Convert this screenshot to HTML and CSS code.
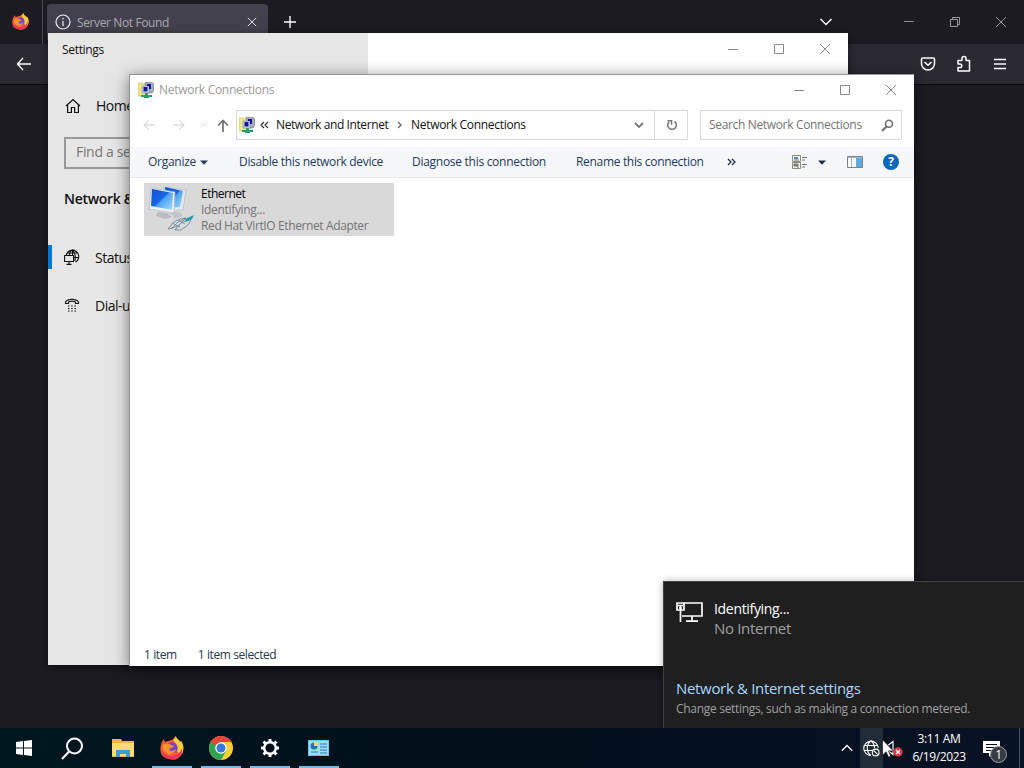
FILE: index.html
```html
<!DOCTYPE html>
<html lang="en">
  <head>
    <meta charset="utf-8">
    <title>Desktop</title>
    <link rel="stylesheet" href="styles.css">
  </head>
  <body>
    <!-- shared icons -->
    <svg class="defs" width="0" height="0">
      <symbol id="net" viewBox="0 0 16 16">
        <path d="M0 1h5l1 1h3v12H0z" fill="#eee58c" stroke="#c9c060" stroke-width=".6"/>
        <path d="M7 .5l7-.3 1.5 1.5v7L14 11H8z" fill="#a7adc0" stroke="#656c80" stroke-width=".6"/>
        <path d="M4 4h7v7H4z" fill="#d6dced" stroke="#777f98" stroke-width=".6"/>
        <path d="M5.500 5h4v4.500h-4zM9 2h4v5h-2V4H9z" fill="#111497"/>
        <path d="M7 11h3v2h4v2h-3v1H6v-1H3v-2h4z" fill="#23a06c"/>
      </symbol>
      <symbol id="firefox" viewBox="0 0 24 24">
        <path d="M12 4C14 3 14 1 16 0c0 3 3 3 4 6l1-1c3 4 3 9 1 13-3 5-8 7-13 5C3 22 0 18 .5 12 .7 8 2 5 4 3l1 3 3-1z" fill="#ff5b36"/>
        <path d="M16 0c0 3 3 3 4 6l1-1c3 4 3 9 1 12-2 1-4 0-5-3 1-5-2-8-4-10 2-1 2-3 3-4z" fill="#ffcf38"/>
        <path d="M1 13c2 6 9 9 15 6 3-1 5-4 6-7 1 7-5 11-10 11S2 20 1 13z" fill="#f72f62"/>
        <circle cx="12" cy="12" r="5.7" fill="#7744c9"/>
        <path d="M3 9c3-3 6-1 8 0l3 1c-1 2-4 2-5 3 1 3 5 2 7 0-1 5-7 7-11 3-2-2-3-4-2-7z" fill="#ff9230"/>
      </symbol>
      <symbol id="close" viewBox="0 0 12 12">
        <path d="M1 1l10 10M11 1L1 11" fill="none" stroke="currentColor"/>
      </symbol>
    </svg>

    <div class="desktop">
      <div class="firefox">
        <div class="tab-bar">
          <div class="pinned">
            <svg width="17" height="17"><use href="#firefox"/></svg>
          </div>
          <div class="tab">
            <svg width="16" height="16" viewBox="0 0 16 16" fill="none" stroke="#f0f0f4" stroke-width="1.2">
              <circle cx="8" cy="8" r="7"/>
              <path d="M8 7v5M8 4v1.6"/>
            </svg>
            <span class="tab-title">Server Not Found</span>
            <svg class="tab-close" width="10" height="10"><use href="#close"/></svg>
          </div>
          <svg class="new-tab" width="14" height="14" viewBox="0 0 14 14"><path d="M7 1v12M1 7h12" stroke="#fbfbfe" stroke-width="1.4"/></svg>
          <div class="browser-controls">
            <svg width="14" height="10" viewBox="0 0 14 10" fill="none" stroke="#fbfbfe" stroke-width="1.5"><path d="M1.500 2L7 7.500 12.500 2"/></svg>
            <svg width="12" height="12" viewBox="0 0 12 12"><path d="M1 5.500h10" stroke="#88878d"/></svg>
            <svg width="12" height="12" viewBox="0 0 12 12" fill="none" stroke="#99989e"><path d="M1.500 3.500h7v7h-7zM3.500 3.500v-2h7v7h-2"/></svg>
            <svg width="12" height="12"><use href="#close"/></svg>
          </div>
        </div>
        <div class="nav-bar">
          <svg width="16" height="14" viewBox="0 0 16 14" fill="none" stroke="#fbfbfe" stroke-width="1.4"><path d="M15 7H1.500M7 1L1.500 7 7 13"/></svg>
          <div class="nav-tools">
            <svg width="16" height="16" viewBox="0 0 16 16" fill="none" stroke="#fbfbfe" stroke-width="1.5"><path d="M2.500 2h11q1 0 1 1v4.500a6.500 6.500 0 0 1-13 0V3q0-1 1-1zM4.500 6L8 9.300 11.500 6"/></svg>
            <svg width="16" height="18" viewBox="0 0 16 18" fill="none" stroke="#fbfbfe" stroke-width="1.5" stroke-linejoin="round"><path d="M2 5.500h4V3.500a2 2 0 0 1 4 0v2h3.500V16H2v-3.500h2a1.800 1.800 0 0 0 0-3.600H2z"/></svg>
            <svg width="14" height="14" viewBox="0 0 14 14"><path d="M1 2.500h12M1 7h12M1 11.500h12" stroke="#fbfbfe" stroke-width="1.4"/></svg>
          </div>
        </div>
      </div>

      <div class="window settings">
        <div class="sidebar">
          <div class="settings-title">Settings</div>
          <div class="side-item home">
            <svg width="16" height="16" viewBox="0 0 16 16" fill="none" stroke="#111" stroke-width="1.2"><path d="M1 8l7-6.500L15 8M2.600 6.500v8h3.800V9.500h3.200v5h3.800v-8"/></svg>
            <span>Home</span>
          </div>
          <div class="find">Find a se</div>
          <div class="side-heading">Network &amp; Internet</div>
          <div class="side-item status">
            <svg width="16" height="16" viewBox="0 0 16 16" fill="none" stroke="#111" stroke-width="1.1">
              <path d="M2.300 6A6.300 6.300 0 1 1 11.500 13M3 4h11M8.500.8C6 2 5.500 4 5.300 6M8.500.8c3 3 3.500 6 2.300 11M8.500.8V6M9.500 8.500h5.300"/>
              <path d="M.6 6.500h9v6h-9zM5 12.500v3M2.500 15.400h5"/>
            </svg>
            <span>Status</span>
          </div>
          <div class="side-item dial">
            <svg width="16" height="16" viewBox="0 0 16 16" fill="none" stroke="#111" stroke-width="1.1">
              <path d="M1.500 6.500V5C4 1.500 12 1.500 14.500 5v1.500h-3V5C10 4 6 4 4.500 5v1.500z"/>
              <path d="M4 9h8M4 11.500h8M4 14h8" stroke-dasharray="1.500 1.700"/>
            </svg>
            <span>Dial-up</span>
          </div>
        </div>
        <div class="window-controls">
          <svg width="12" height="12" viewBox="0 0 12 12"><path d="M1 6.500h10" stroke="currentColor"/></svg>
          <svg width="12" height="12" viewBox="0 0 12 12"><path d="M1.500 1.500h9v9h-9z" fill="none" stroke="currentColor"/></svg>
          <svg width="12" height="12"><use href="#close"/></svg>
        </div>
      </div>

      <div class="window explorer">
        <div class="title-bar">
          <svg width="16" height="16"><use href="#net"/></svg>
          <span class="title">Network Connections</span>
          <div class="window-controls">
            <svg width="12" height="12" viewBox="0 0 12 12"><path d="M1 6.500h10" stroke="currentColor"/></svg>
            <svg width="12" height="12" viewBox="0 0 12 12"><path d="M1.500 1.500h9v9h-9z" fill="none" stroke="currentColor"/></svg>
            <svg width="12" height="12"><use href="#close"/></svg>
          </div>
        </div>

        <div class="address-row">
          <div class="history">
            <svg width="12" height="12" viewBox="0 0 12 12" fill="none" stroke="#dcdcdc" stroke-width="1.3"><path d="M12 6H1M5.500 1.500L1 6l4.500 4.500"/></svg>
            <svg width="12" height="12" viewBox="0 0 12 12" fill="none" stroke="#dcdcdc" stroke-width="1.3"><path d="M0 6h11M6.500 1.500L11 6l-4.500 4.500"/></svg>
            <svg width="6" height="6" viewBox="0 0 6 6" fill="none" stroke="#d0d0d0"><path d="M.5 1.500L3 4l2.500-2.500"/></svg>
            <svg width="12" height="13" viewBox="0 0 12 13" fill="none" stroke="#707070" stroke-width="1.700"><path d="M6 13V1.500M1 6.500l5-5 5 5"/></svg>
          </div>
          <div class="address">
            <svg width="16" height="16"><use href="#net"/></svg>
            <svg width="9" height="8" viewBox="0 0 9 8" fill="none" stroke="#333" stroke-width="1.200"><path d="M4 1L1 4l3 3M8 1L5 4l3 3"/></svg>
            <span>Network and Internet</span>
            <svg width="5" height="8" viewBox="0 0 5 8" fill="none" stroke="#666" stroke-width="1.400"><path d="M1 1l3 3-3 3"/></svg>
            <span class="here">Network Connections</span>
            <svg width="10" height="7" viewBox="0 0 10 7" fill="none" stroke="#777" stroke-width="1.800"><path d="M1 1l4 4 4-4"/></svg>
          </div>
          <div class="refresh">
            <svg width="12" height="12" viewBox="0 0 12 12" fill="none" stroke="#777" stroke-width="1.600"><path d="M8.500 2.500A4.300 4.300 0 1 1 3 3M1.500 1.800h4v4"/></svg>
          </div>
          <div class="search">
            <span>Search Network Connections</span>
            <svg width="13" height="13" viewBox="0 0 13 13" fill="none" stroke="#6d6d6d" stroke-width="1.600"><circle cx="8" cy="4.800" r="3.500"/><path d="M5.500 7.500L1 12" stroke-width="2"/></svg>
          </div>
        </div>

        <div class="toolbar">
          <span class="organize">Organize</span>
          <svg width="8" height="5" viewBox="0 0 8 5"><path d="M0 .5h8L4 4.800z" fill="#1e395b"/></svg>
          <span class="disable">Disable this network device</span>
          <span class="diagnose">Diagnose this connection</span>
          <span class="rename">Rename this connection</span>
          <svg width="9" height="8" viewBox="0 0 9 8" fill="none" stroke="#1e2c4b" stroke-width="1.300"><path d="M1 1l3 3-3 3M5 1l3 3-3 3"/></svg>
          <svg width="16" height="16" viewBox="0 0 16 16"><path d="M.5 1.500h8v6h-8zM.5 8.500h8v6h-8z" fill="#f4f4ed" stroke="#8b8b82"/><path d="M2 3h4v2H2z" fill="#5686ae"/><path d="M2 6h5M2 10h4v2H2zM5 13h2" fill="#77806b" stroke="#777"/><path d="M10 3.500h5M10 6h3M10 10.500h5M10 13h3" stroke="#67717b"/></svg>
          <svg width="8" height="5" viewBox="0 0 8 5"><path d="M0 .5h8L4 4.800z" fill="#1e2c4b"/></svg>
          <svg width="16" height="12" viewBox="0 0 16 12"><path d="M.5.5h15v11H.5z" fill="#f5fafc" stroke="#77838a"/><path d="M1 1.500h14M4.500 2v9" stroke="#a6b8c3"/><path d="M9 2h6v9H9z" fill="#5cabe0"/></svg>
          <div class="help">?</div>
        </div>

        <div class="files">
          <div class="connection">
            <svg width="48" height="48" viewBox="0 0 48 48">
              <defs>
                <linearGradient id="screen" x1="0" y1="0" x2="1" y2="1"><stop stop-color="#0e4fd7"/><stop offset=".48" stop-color="#1868e5"/><stop offset=".52" stop-color="#4da0f3"/><stop offset="1" stop-color="#a5e0fc"/></linearGradient>
              </defs>
              <path d="M23 27h10l3 4-8 3z" fill="#c3c6c9"/>
              <path d="M17 2l22 3-3 20-16 1z" fill="#e2e8ef" stroke="#b6bdc5" stroke-width=".7"/>
              <path d="M18 2l18 4-3 16-13 1z" fill="url(#screen)"/>
              <path d="M11 27l9 1 5 4-7 2-9-3z" fill="#b9bdc1"/>
              <path d="M4 3l24 4-1 21L2 24z" fill="#eef3f7" stroke="#b2b9c0" stroke-width=".7"/>
              <path d="M5 4l21 4-1 17L4 21z" fill="url(#screen)"/>
              <!-- cable and plug -->
              <path d="M28 36l7-4 9 1-3 6-9 6-7-2z" fill="#d5dee3"/>
              <path d="M21 44l6-7 6-3 6-1-8 8-9 3zM24 44l7-7 8-4M28 45l6-7 10-4-2 5-8 6zM25 38l8 4M31 35l7 4" fill="none" stroke="#7b8992" stroke-width=".9"/>
              <path d="M38 34l9-4-2 4-6 3z" fill="#2b9bad"/>
            </svg>
            <div class="connection-text">
              <div class="name">Ethernet</div>
              <div>Identifying...</div>
              <div class="adapter">Red Hat VirtIO Ethernet Adapter</div>
            </div>
          </div>
        </div>

        <div class="status-bar">
          <span>1 item</span>
          <span>1 item selected</span>
        </div>
      </div>

      <div class="flyout">
        <div class="network">
          <svg width="27" height="21" viewBox="0 0 27 21" fill="none" stroke="#fff" stroke-width="1.700"><path d="M8 1h18v13H6M1 1h7v7H1zM2 3.500h5M4.500 4v16M3 6h3M16 14v5M10 19.200h12"/></svg>
          <div>
            <div class="network-name">Identifying...</div>
            <div class="network-state">No Internet</div>
          </div>
        </div>
        <div class="settings-link">Network &amp; Internet settings</div>
        <div class="settings-hint">Change settings, such as making a connection metered.</div>
      </div>

      <div class="taskbar">
        <div class="task start">
          <svg width="16" height="16" viewBox="0 0 16 16" fill="#fff"><path d="M0 2l7-1v6.500H0zM8 .9L16 0v7.500H8zM0 8.500h7V15l-7-1zM8 8.500h8V16l-8-1z"/></svg>
        </div>
        <div class="task find-task">
          <svg width="23" height="23" viewBox="0 0 23 23" fill="none" stroke="#fff" stroke-width="2"><circle cx="13.500" cy="9" r="7.500"/><path d="M8 14.500L1 22"/></svg>
        </div>
        <div class="task">
          <svg width="22" height="18" viewBox="0 0 22 18"><path d="M0 0h9l1 2h12v16H0z" fill="#edb63c"/><path d="M0 4h22v13H0z" fill="#ffdc78"/><path d="M4 18v-7h14v7h-4v-3H8v3z" fill="#489bc8"/></svg>
        </div>
        <div class="task open">
          <svg width="24" height="24"><use href="#firefox"/></svg>
        </div>
        <div class="task open">
          <svg width="24" height="24" viewBox="0 0 24 24">
            <circle cx="12" cy="12" r="12" fill="#fdce36"/>
            <path d="M1.600 6A12 12 0 0 0 12 24l5.200-9H12z" fill="#31a350"/>
            <path d="M1.600 6l5.200 9L12 12V6z" fill="#31a350"/>
            <path d="M1.600 6A12 12 0 0 1 22.400 6H12L7 9.500z" fill="#e44539"/>
            <circle cx="12" cy="12" r="5.800" fill="#fff"/><circle cx="12" cy="12" r="4.500" fill="#3478df"/>
          </svg>
        </div>
        <div class="task open">
          <svg width="20" height="20" viewBox="-10 -10 20 20" fill="none" stroke="#fff"><circle r="5.800" stroke-width="2.400"/><path d="M0-6v-3M0 6v3M-6 0h-3M6 0h3M4.300-4.300l2.200-2.200M-4.300 4.300l-2.200 2.200M-4.300-4.300l-2.200-2.200M4.300 4.300l2.200 2.200" stroke-width="3"/></svg>
        </div>
        <div class="task open">
          <svg width="21" height="16" viewBox="0 0 21 16"><path d="M0 0h21v16H0z" fill="#67c4ef"/><path d="M1 1h19v14H1z" fill="#9bddf8"/><circle cx="6" cy="6" r="3.500" fill="#2573b5"/><path d="M6 6V2a4 4 0 0 1 4 4z" fill="#f1d765"/><path d="M12 4h7M12 7h7M12 10h7M3 12h7M12 13h7" stroke="#267fbf" stroke-width="1.200"/></svg>
        </div>
        <div class="tray">
          <svg class="tray-up" width="12" height="8" viewBox="0 0 12 8" fill="none" stroke="#fff" stroke-width="1.300"><path d="M.8 6.800L6 1.500l5.200 5.300"/></svg>
          <div class="tray-net">
            <svg width="17" height="17" viewBox="0 0 17 17" fill="none" stroke="#fff" stroke-width="1.100"><path d="M8 15.500A7.200 7.200 0 1 1 15.200 8M1 5.500h14M1 10.500h8M8 1C3 4 3 12 8 15.500M8 1c3 2 3.500 4 3.500 7"/><circle cx="12.700" cy="12.500" r="3.400"/><path d="M10.500 10.300l4.400 4.400"/></svg>
          </div>
          <svg class="tray-sound" width="20" height="18" viewBox="0 0 20 18"><path d="M1 5.500h4l5-4v13l-5-4H1z" fill="none" stroke="#fff" stroke-width="1.200"/><circle cx="15" cy="12" r="4.700" fill="#d9363f"/><path d="M13 10l4 4M17 10l-4 4" stroke="#fff" stroke-width="1.300"/></svg>
          <div class="clock">
            <div class="time">3:11 AM</div>
            <div class="date">6/19/2023</div>
          </div>
          <div class="notifications">
            <svg width="17" height="17" viewBox="0 0 17 17"><path d="M0 1h17v12H9l-3 4v-4H0z" fill="#fff"/><path d="M3 4.500h11M3 7.500h11M3 10.500h7" stroke="#071322"/></svg>
            <div class="badge">1</div>
          </div>
          <div class="show-desktop"></div>
        </div>
      </div>

      <svg class="cursor" width="12" height="19" viewBox="0 0 12 19"><path d="M.5.700v15.500l3.600-3.400 2.500 5.500 2.300-1-2.500-5.400h5z" fill="#fff" stroke="#111" stroke-width=".7"/></svg>
    </div>
  </body>
</html>
```

FILE: styles.css
```css
body {
    margin: 0;
    font-family: "Open Sans", "Noto Sans", sans-serif;
    font-size: 12px;
    letter-spacing: -0.32px;
    line-height: 16px;
    color: #111;
}
* {
    box-sizing: border-box;
}
svg {
    display: block;
    flex-shrink: 0;
}
span {
    white-space: nowrap;
}
.defs {
    position: absolute;
}
.desktop {
    position: relative;
    width: 1024px;
    height: 768px;
    overflow: hidden;
    background-color: #1c1b21;
}

/* browser at the back */
.tab-bar {
    display: flex;
    height: 44px;
    background-color: #1c1b21;
}
.pinned {
    width: 43px;
    padding: 13px 0 0 12px;
    border-right: 1px solid #4c4a55;
}
.tab {
    display: flex;
    align-items: center;
    width: 221px;
    height: 36px;
    margin: 4px 0 0 4px;
    padding-left: 8px;
    border-radius: 4px 4px 0 0;
    background-color: #42414d;
}
.tab-title {
    width: 170px;
    margin-left: 6px;
    padding-top: 2px;
    letter-spacing: -0.38px;
    color: #aaa9b2;
}
.tab-close {
    color: #fff;
}
.new-tab {
    margin: 15px 0 0 15px;
}
.browser-controls {
    display: grid;
    grid-template-columns: 84px 46px 46px 29px;
    align-items: center;
    height: 44px;
    margin-left: auto;
    color: #99989e;
}
.nav-bar {
    display: flex;
    align-items: center;
    height: 41px;
    padding: 0 17px 1px 16px;
    background-color: #2b2a33;
    border-bottom: 1px solid #09090c;
}
.nav-tools {
    display: grid;
    grid-template-columns: 36px 37px 14px;
    align-items: center;
    margin-left: auto;
}

/* windows */
.window {
    position: absolute;
    background-color: #fff;
}
.window-controls {
    display: flex;
    gap: 34px;
    margin-left: auto;
    color: #888;
}
.settings {
    display: flex;
    left: 48px;
    top: 33px;
    width: 800px;
    height: 632px;
    font-size: 14px;
    box-shadow: 0 2px 9px rgba(0, 0, 0, 0.5);
}
.settings > .window-controls {
    padding: 10px 17px 0 0;
}
.sidebar {
    width: 320px;
    background-color: #e6e6e6;
}
.settings-title {
    padding: 9px 14px;
    font-size: 12px;
}
.side-item {
    display: flex;
    align-items: center;
    gap: 15px;
    height: 24px;
    margin-bottom: 24px;
    padding-left: 16px;
    letter-spacing: -0.5px;
}
.side-item.home {
    margin: 27px 0 19px;
    padding-left: 17px;
}
.find {
    width: 290px;
    height: 32px;
    margin-left: 16px;
    padding: 5px 10px;
    border: 2px solid #999;
    color: #777;
}
.side-heading {
    padding: 22px 16px 38px;
    font-weight: 600;
    letter-spacing: -0.3px;
}
.status {
    border-left: 4px solid #0078d4;
    padding-left: 12px;
}
.status span,
.dial span {
    padding-top: 2px;
}

.explorer {
    display: flex;
    flex-direction: column;
    left: 129px;
    top: 74px;
    width: 785px;
    height: 592px;
    border: 1px solid #949494;
    border-right-color: #fff;
    border-bottom-color: #fff;
    box-shadow: 0 3px 15px rgba(0, 0, 0, 0.5);
}
.title-bar {
    display: flex;
    align-items: center;
    height: 29px;
    padding: 0 16px 0 8px;
    color: #9a9a9a;
}
.title {
    margin-left: 5px;
    letter-spacing: -0.28px;
}
.address-row {
    display: flex;
    height: 30px;
    margin-top: 6px;
}
.history {
    display: grid;
    grid-template-columns: 30px 27px 17px 19px;
    align-items: center;
    width: 106px;
    padding-left: 13px;
}
.address {
    display: grid;
    grid-template-columns: 21px 16px 121px 14px 223px 10px;
    align-items: center;
    width: 419px;
    padding-left: 2px;
    border: 1px solid #d9d9d9;
    letter-spacing: -0.4px;
}
.here {
    letter-spacing: -0.3px;
}
.refresh {
    display: grid;
    place-items: center;
    width: 33px;
    padding-left: 2px;
    border: 1px solid #d9d9d9;
    border-left: none;
}
.search {
    display: flex;
    align-items: center;
    justify-content: space-between;
    width: 202px;
    margin-left: 12px;
    padding: 0 7px 0 8px;
    border: 1px solid #d9d9d9;
    letter-spacing: -0.34px;
    color: #737373;
}
.toolbar {
    display: grid;
    grid-template-columns: 52px 39px 173px 164px 151px 65px 26px 29px 36px 16px;
    align-items: center;
    height: 31px;
    margin-top: 7px;
    padding-left: 18px;
    background-color: #f5f7fa;
    border-bottom: 1px solid #e4e8ed;
    color: #1e395b;
}
.organize,
.diagnose {
    letter-spacing: -0.28px;
}
.help {
    width: 16px;
    height: 16px;
    border-radius: 50%;
    background-color: #0868be;
    color: #fff;
    font-weight: bold;
    text-align: center;
}
.files {
    flex: 1;
    padding: 5px 14px;
}
.connection {
    display: flex;
    width: 250px;
    height: 53px;
    padding: 2px 3px;
    background-color: #d9d9d9;
    color: #737373;
}
.connection-text {
    margin: 1px 0 0 6px;
}
.name {
    letter-spacing: -0.5px;
    color: #000;
}
.adapter {
    letter-spacing: -0.38px;
}
.status-bar {
    display: flex;
    gap: 21px;
    height: 18px;
    padding-left: 14px;
    letter-spacing: -0.4px;
    color: #26384c;
}

/* network flyout */
.flyout {
    position: absolute;
    left: 663px;
    top: 581px;
    width: 361px;
    height: 147px;
    padding: 18px 12px 0;
    border: 1px solid #414141;
    border-width: 1px 0 0 1px;
    background-color: #1f1f1f;
    color: #a0a0a0;
    box-shadow: 0 0 7px rgba(0, 0, 0, 0.3);
}
.network {
    display: flex;
    gap: 11px;
    height: 78px;
}
.network svg {
    margin-top: 2px;
}
.network-name {
    height: 18px;
    padding-top: 1px;
    font-size: 14px;
    color: #fff;
}
.network-state {
    font-size: 15px;
    line-height: 20px;
}
.settings-link {
    margin-bottom: 3px;
    font-size: 15px;
    line-height: 20px;
    color: #a6d8ff;
}
.settings-hint {
    letter-spacing: -0.3px;
}

/* taskbar */
.taskbar {
    position: absolute;
    left: 0;
    top: 728px;
    display: flex;
    width: 1024px;
    height: 40px;
    background: linear-gradient(to right, #001720, #020f1b 50%, #071224);
}
.task {
    display: grid;
    place-items: center;
    width: 49px;
    height: 40px;
}
.start,
.find-task {
    padding-right: 2px;
}
.open {
    background: linear-gradient(#76b9ed, #76b9ed) center bottom / 40px 2px no-repeat;
}
.tray {
    display: flex;
    align-items: center;
    margin-left: auto;
    color: #fff;
}
.tray-up {
    margin-right: 7px;
}
.tray-net {
    display: grid;
    place-items: center;
    width: 23px;
    height: 40px;
    background-color: #202c38;
}
.tray-sound {
    margin-top: 2px;
}
.clock {
    width: 72px;
    line-height: 18px;
    text-align: center;
}
.date {
    letter-spacing: -0.4px;
}
.notifications {
    position: relative;
    width: 44px;
    padding-left: 8px;
}
.badge {
    position: absolute;
    left: 15px;
    top: 6px;
    width: 17px;
    height: 17px;
    border: 1px solid #a0a4a8;
    border-radius: 50%;
    background-color: #363c43;
    line-height: 15px;
    text-align: center;
}
.show-desktop {
    width: 5px;
    height: 40px;
    border-left: 1px solid #4b5561;
}
.cursor {
    position: absolute;
    left: 882px;
    top: 739px;
}
```
